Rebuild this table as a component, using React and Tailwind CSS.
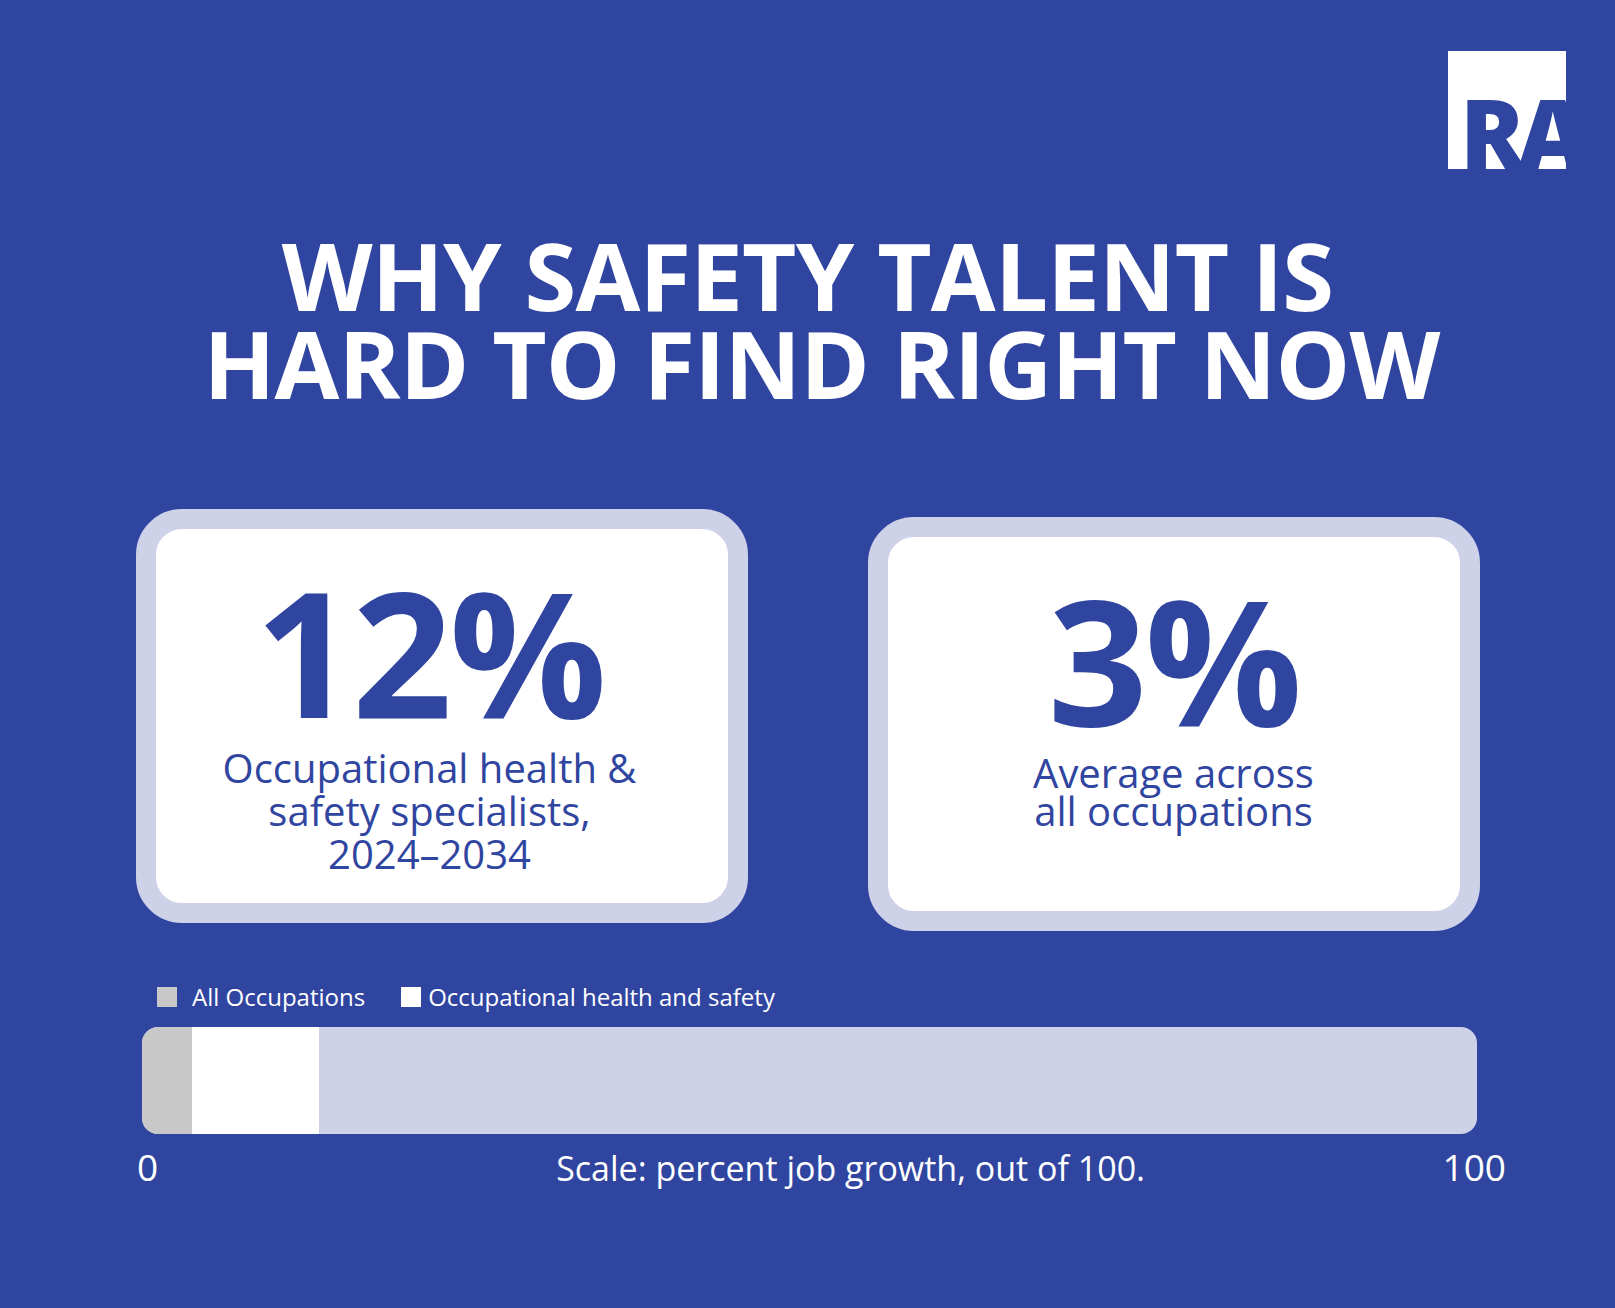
import React from "react";

function Logo() {
  return (
    <svg width="118" height="118" viewBox="0 0 118 118">
      <defs>
        <clipPath id="logo-box">
          <rect x="0" y="0" width="118" height="118" />
        </clipPath>
      </defs>
      <rect x="0" y="0" width="118" height="118" fill="#ffffff" />
      <g clipPath="url(#logo-box)">
        <text
          x="12"
          y="118"
          fill="#2f45a0"
          fontFamily="'Open Sans', sans-serif"
          fontWeight="800"
          fontSize="96"
          letterSpacing="-7"
        >
          RA
        </text>
      </g>
    </svg>
  );
}

function StatCard({ value, lines, leading, className = "" }) {
  return (
    <div
      className={
        "w-[612px] h-[414px] rounded-[46px] border-[20px] border-[#cdd2e8] bg-white flex flex-col items-center pt-[34px] text-[#2f45a0] " +
        className
      }
    >
      <div className="text-[175px] leading-[175px] font-bold tracking-[-3px]">{value}</div>
      <div className={"mt-[8px] text-[40px] text-center " + leading}>
        {lines.map((l) => (
          <div key={l}>{l}</div>
        ))}
      </div>
    </div>
  );
}

export default function App() {
  return (
    <div className="w-[1615px] h-[1308px] bg-[#2f45a0] font-['Open_Sans',sans-serif] flex flex-col">
      <div className="flex justify-end pt-[51px] pr-[49px]">
        <Logo />
      </div>

      <h1 className="mt-[62px] text-center text-white font-bold text-[94px] leading-[88px] tracking-[-0.8px]">
        <div>WHY SAFETY TALENT IS</div>
        <div className="pl-[28px]">HARD TO FIND RIGHT NOW</div>
      </h1>

      <div className="mt-[102px] flex justify-center items-start gap-[120px]">
        <StatCard
          value="12%"
          leading="leading-[43px]"
          className="pr-[24px]"
          lines={["Occupational health &", "safety specialists,", "2024–2034"]}
        />
        <StatCard
          value="3%"
          leading="leading-[38px]"
          className="mt-[8px]"
          lines={["Average across", "all occupations"]}
        />
      </div>

      <div className="pl-[142px] pr-[138px]">
        <div className="mt-[51px] flex items-center text-white text-[24px] leading-[30px]">
          <span className="ml-[15px] w-[20px] h-[20px] bg-[#c8c8c8]" />
          <span className="ml-[15px]">All Occupations</span>
          <span className="ml-[36px] w-[20px] h-[20px] bg-white" />
          <span className="ml-[7px]">Occupational health and safety</span>
        </div>

        <div className="mt-[15px] h-[107px] rounded-[16px] bg-[#cdd2e8] overflow-hidden flex">
          <div className="w-[50px] bg-[#c8c8c8]" />
          <div className="w-[127px] bg-white" />
        </div>

        <div className="mt-[13px] -ml-[5px] -mr-[29px] flex items-baseline text-white text-[37px] leading-[40px]">
          <span>0</span>
          <span className="ml-[398px] text-[34px]">Scale: percent job growth, out of 100.</span>
          <span className="ml-auto">100</span>
        </div>
      </div>
    </div>
  );
}
